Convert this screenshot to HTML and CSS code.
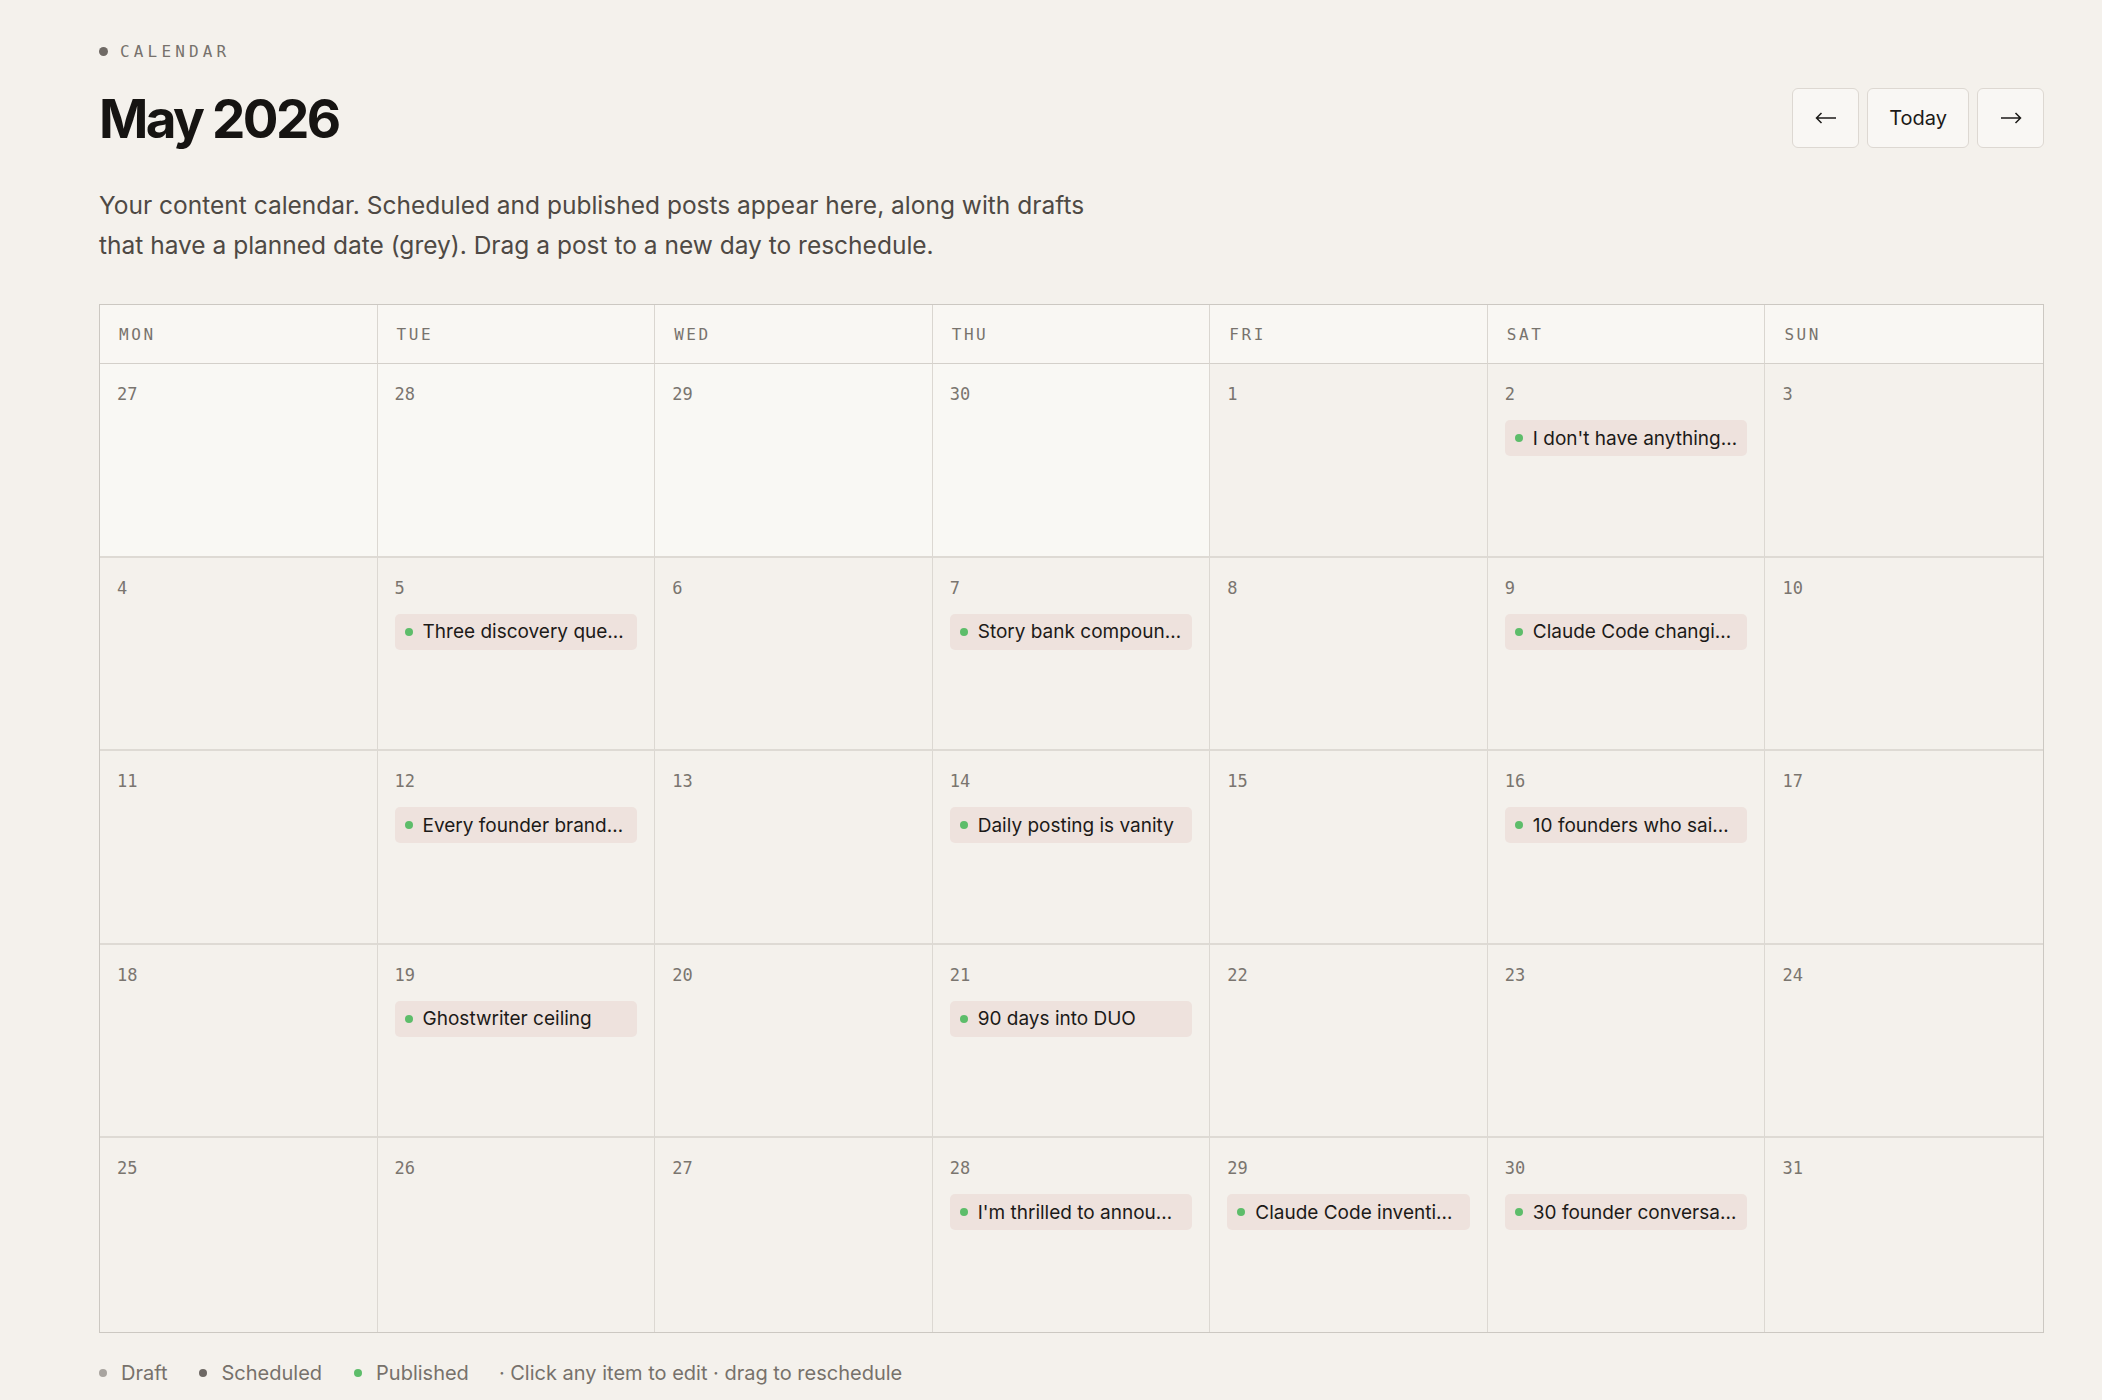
FILE: index.html
```html
<!DOCTYPE html>
<html lang="en">
<head>
  <meta charset="UTF-8">
  <title>Calendar</title>
  <link rel="stylesheet" href="styles.css">
</head>
<body>
  <main class="page">
    <div class="eyebrow"><span class="eyebrow-dot"></span>CALENDAR</div>
    <div class="title-row">
      <h1 class="title">May 2026</h1>
      <div class="nav">
        <button class="nav-btn arrow" aria-label="Previous month">
          <svg width="22" height="12" viewBox="0 0 22 12"><path d="M21 6H1.5M6.5 1L1.5 6l5 5" fill="none" stroke="currentColor" stroke-width="1.5"/></svg>
        </button>
        <button class="nav-btn">Today</button>
        <button class="nav-btn arrow" aria-label="Next month">
          <svg width="22" height="12" viewBox="0 0 22 12"><path d="M1 6h19.5M15.5 1l5 5-5 5" fill="none" stroke="currentColor" stroke-width="1.5"/></svg>
        </button>
      </div>
    </div>
    <p class="intro">Your content calendar. Scheduled and published posts appear here, along with drafts<br>that have a planned date (grey). Drag a post to a new day to reschedule.</p>

    <div class="cal">
      <div class="dow">MON</div>
      <div class="dow">TUE</div>
      <div class="dow">WED</div>
      <div class="dow">THU</div>
      <div class="dow">FRI</div>
      <div class="dow">SAT</div>
      <div class="dow last-col">SUN</div>

      <!-- week 1 -->
      <div class="day other"><span class="num">27</span></div>
      <div class="day other"><span class="num">28</span></div>
      <div class="day other"><span class="num">29</span></div>
      <div class="day other"><span class="num">30</span></div>
      <div class="day"><span class="num">1</span></div>
      <div class="day"><span class="num">2</span>
        <div class="post"><span class="dot published"></span><span class="post-title">I don't have anything new to share</span></div>
      </div>
      <div class="day last-col"><span class="num">3</span></div>

      <!-- week 2 -->
      <div class="day"><span class="num">4</span></div>
      <div class="day"><span class="num">5</span>
        <div class="post"><span class="dot published"></span><span class="post-title">Three discovery questions I ask every founder</span></div>
      </div>
      <div class="day"><span class="num">6</span></div>
      <div class="day"><span class="num">7</span>
        <div class="post"><span class="dot published"></span><span class="post-title">Story bank compounds over time</span></div>
      </div>
      <div class="day"><span class="num">8</span></div>
      <div class="day"><span class="num">9</span>
        <div class="post"><span class="dot published"></span><span class="post-title">Claude Code changing how I write</span></div>
      </div>
      <div class="day last-col"><span class="num">10</span></div>

      <!-- week 3 -->
      <div class="day"><span class="num">11</span></div>
      <div class="day"><span class="num">12</span>
        <div class="post"><span class="dot published"></span><span class="post-title">Every founder brand starts with a story</span></div>
      </div>
      <div class="day"><span class="num">13</span></div>
      <div class="day"><span class="num">14</span>
        <div class="post"><span class="dot published"></span><span class="post-title">Daily posting is vanity</span></div>
      </div>
      <div class="day"><span class="num">15</span></div>
      <div class="day"><span class="num">16</span>
        <div class="post"><span class="dot published"></span><span class="post-title">10 founders who said no to ghostwriting</span></div>
      </div>
      <div class="day last-col"><span class="num">17</span></div>

      <!-- week 4 -->
      <div class="day"><span class="num">18</span></div>
      <div class="day"><span class="num">19</span>
        <div class="post"><span class="dot published"></span><span class="post-title">Ghostwriter ceiling</span></div>
      </div>
      <div class="day"><span class="num">20</span></div>
      <div class="day"><span class="num">21</span>
        <div class="post"><span class="dot published"></span><span class="post-title">90 days into DUO</span></div>
      </div>
      <div class="day"><span class="num">22</span></div>
      <div class="day"><span class="num">23</span></div>
      <div class="day last-col"><span class="num">24</span></div>

      <!-- week 5 -->
      <div class="day last-row"><span class="num">25</span></div>
      <div class="day last-row"><span class="num">26</span></div>
      <div class="day last-row"><span class="num">27</span></div>
      <div class="day last-row"><span class="num">28</span>
        <div class="post"><span class="dot published"></span><span class="post-title">I'm thrilled to announce our new studio</span></div>
      </div>
      <div class="day last-row"><span class="num">29</span>
        <div class="post"><span class="dot published"></span><span class="post-title">Claude Code inventing new workflows</span></div>
      </div>
      <div class="day last-row"><span class="num">30</span>
        <div class="post"><span class="dot published"></span><span class="post-title">30 founder conversations later</span></div>
      </div>
      <div class="day last-row last-col"><span class="num">31</span></div>
    </div>

    <div class="legend">
      <span class="legend-item"><span class="dot draft"></span>Draft</span>
      <span class="legend-item"><span class="dot scheduled"></span>Scheduled</span>
      <span class="legend-item"><span class="dot published"></span>Published</span>
      <span class="legend-hint">&middot; Click any item to edit &middot; drag to reschedule</span>
    </div>
  </main>
</body>
</html>
```

FILE: styles.css
```css
html, body { margin:0; padding:0; background:#f4f1ec; font-family:Inter, "Noto Sans", sans-serif; color:#1c1a18; }
.page { width:1945px; padding:42px 0 0 99px; }

.eyebrow { display:flex; align-items:center; height:18px; font-family:"DejaVu Sans Mono", monospace; font-size:16px; letter-spacing:0.26em; color:#77726c; }
.eyebrow-dot { width:9px; height:9px; border-radius:50%; background:#6f6a65; margin-right:12px; }

.title-row { display:flex; align-items:center; justify-content:space-between; margin-top:28px; }
.title { margin:0; font-size:53px; line-height:62px; font-weight:700; letter-spacing:-0.05em; color:#161412; }
.nav { display:flex; gap:8px; margin-top:-3px; }
.nav-btn { display:flex; align-items:center; justify-content:center; height:60px; min-width:67px; padding:0 21px; background:#f9f7f4; border:1px solid #ddd8d2; border-radius:6px; font-family:Inter, sans-serif; font-size:20px; color:#1c1a18; }
.nav-btn.arrow { padding:0; }

.intro { margin:35px 0 0; font-size:24.5px; line-height:40px; color:#4e4944; }

.cal { display:grid; grid-template-columns:repeat(7, 1fr); grid-template-rows:59px repeat(5, 193.5px); margin-top:39px; border:1px solid #ccc8c2; }
.dow { display:flex; align-items:center; padding-left:19px; background:#f9f7f3; border-right:1px solid #dad6d0; border-bottom:1px solid #d4d0ca; font-family:"DejaVu Sans Mono", monospace; font-size:16px; letter-spacing:0.16em; color:#78736d; }
.day { min-width:0; padding:20px 17px 0; border-right:1px solid #dcd8d2; border-bottom:2px solid #dedad4; }
.day.other { background:#f9f8f4; }
.last-col { border-right:none; }
.last-row { border-bottom:none; }
.num { display:block; font-family:"DejaVu Sans Mono", monospace; font-size:17px; line-height:21px; color:#7a756f; }

.post { display:flex; align-items:center; gap:10px; height:36px; margin-top:15px; padding:0 10px; background:#eee2dd; border-radius:5px; font-size:19px; color:#1c1a18; }
.post-title { min-width:0; overflow:hidden; white-space:nowrap; text-overflow:ellipsis; }

.dot { flex:none; display:inline-block; width:8px; height:8px; border-radius:50%; }
.dot.published { background:#5dbd6a; }
.dot.scheduled { background:#6d6864; }
.dot.draft { background:#a8a49f; }

.legend { display:flex; align-items:center; margin-top:28px; font-size:20px; line-height:24px; color:#77716b; }
.legend-item { display:flex; align-items:center; gap:14px; margin-right:32px; }
.legend-hint { margin-left:-2px; }
```
